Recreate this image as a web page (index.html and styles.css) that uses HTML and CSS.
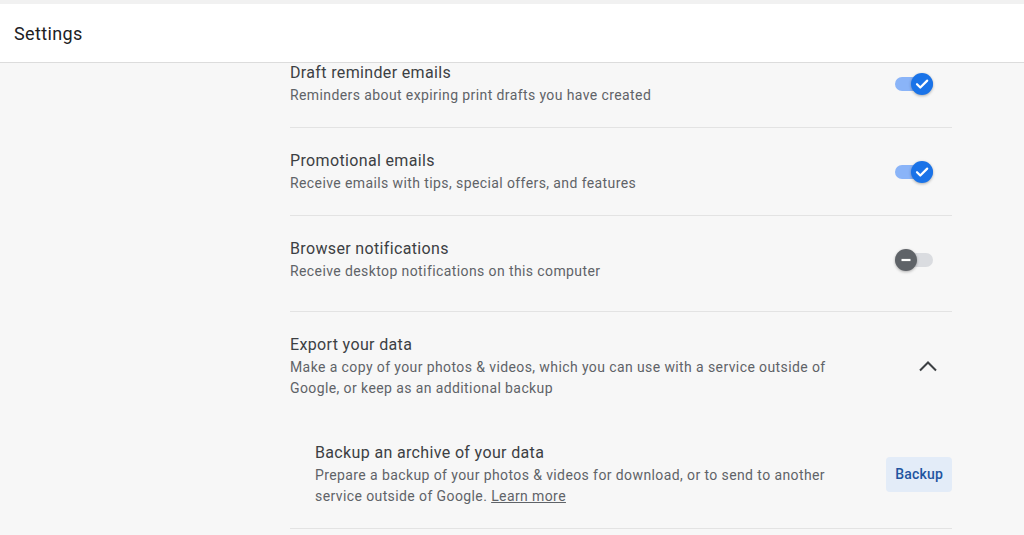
FILE: index.html
```html
<!DOCTYPE html>
<html lang="en">
<head>
  <meta charset="UTF-8">
  <title>Settings</title>
  <link rel="stylesheet" href="styles.css">
</head>
<body>

  <header class="topbar">
    <h1 class="topbar-title">Settings</h1>
  </header>

  <main class="content">
    <section class="group">
      <div class="row">
        <div class="row-text">
          <div class="row-title">Draft reminder emails</div>
          <div class="row-desc">Reminders about expiring print drafts you have created</div>
        </div>
        <div class="toggle on">
          <span class="track"></span>
          <span class="knob">
            <svg viewBox="0 0 22 22" width="22" height="22"><path d="M6 11.2l3.3 3.3L16.2 7.6" fill="none" stroke="#fff" stroke-width="2.2" stroke-linecap="round" stroke-linejoin="round"/></svg>
          </span>
        </div>
      </div>

      <div class="row">
        <div class="row-text">
          <div class="row-title">Promotional emails</div>
          <div class="row-desc">Receive emails with tips, special offers, and features</div>
        </div>
        <div class="toggle on">
          <span class="track"></span>
          <span class="knob">
            <svg viewBox="0 0 22 22" width="22" height="22"><path d="M6 11.2l3.3 3.3L16.2 7.6" fill="none" stroke="#fff" stroke-width="2.2" stroke-linecap="round" stroke-linejoin="round"/></svg>
          </span>
        </div>
      </div>

      <div class="row">
        <div class="row-text">
          <div class="row-title">Browser notifications</div>
          <div class="row-desc">Receive desktop notifications on this computer</div>
        </div>
        <div class="toggle off">
          <span class="track"></span>
          <span class="knob">
            <svg viewBox="0 0 22 22" width="22" height="22"><path d="M6.5 11h9" stroke="#fff" stroke-width="2.2"/></svg>
          </span>
        </div>
      </div>
    </section>

    <section class="export">
      <div class="row export-head">
        <div class="row-text">
          <div class="row-title">Export your data</div>
          <div class="row-desc">Make a copy of your photos &amp; videos, which you can use with a service outside of Google, or keep as an additional backup</div>
        </div>
        <div class="chevron">
          <svg viewBox="0 0 20 12" width="20" height="12"><path d="M2 10.5l8-8 8 8" fill="none" stroke="#3c4043" stroke-width="2"/></svg>
        </div>
      </div>

      <div class="row sub-row">
        <div class="row-text">
          <div class="row-title">Backup an archive of your data</div>
          <div class="row-desc">Prepare a backup of your photos &amp; videos for download, or to send to another service outside of Google. <a href="#" class="learn">Learn more</a></div>
        </div>
        <button class="btn-backup">Backup</button>
      </div>
    </section>
  </main>

</body>
</html>
```

FILE: styles.css
```css
html, body { background: #f7f7f7; }
body { margin: 0; font-family: Roboto, "Liberation Sans", sans-serif; color: #3c4043; }

.topbar {
  position: relative; z-index: 1;
  height: 58px;
  background: #fff; border-top: 4px solid #f1f1f1; border-bottom: 1px solid #dcdcdc;
  display: flex; align-items: center; padding-left: 14px;
}
.topbar-title { margin: 0; font-size: 18px; font-weight: 400; color: #202124; letter-spacing: 0.35px; }

.content { width: 662px; margin: -23px 0 0 290px; }

.row { display: flex; align-items: center; padding: 21px 0; border-bottom: 1px solid #e3e3e3; gap: 40px; }
.group .row:last-child { border-bottom: none; }
.row-text { flex: 1; }
.row-title { font-size: 16px; line-height: 24px; color: #3c4043; letter-spacing: 0.35px; }
.row-desc { font-size: 14px; line-height: 21px; color: #5f6368; letter-spacing: 0.4px; }

.export { margin-top: 8px; border-top: 1px solid #e3e3e3; }
.export-head { border-bottom: none; }
.sub-row { padding-left: 25px; gap: 24px; }

.toggle { position: relative; width: 38px; height: 22px; margin-right: 19px; }
.track { position: absolute; left: 0; right: 0; top: 4px; height: 14px; border-radius: 7px; }
.knob {
  position: absolute; top: 0; width: 22px; height: 22px; border-radius: 50%;
  box-shadow: 0 1px 3px rgba(0,0,0,0.3);
}
.knob svg { display: block; }
.toggle.on .track { background: #8ab4f8; }
.toggle.on .knob { right: 0; background: #1a73e8; }
.toggle.off .track { background: #dadce0; }
.toggle.off .knob { left: 0; background: #5f6368; }

.chevron { width: 48px; display: flex; justify-content: center; }
.chevron svg { display: block; }

.learn { color: #5f6368; text-decoration: underline; }

.btn-backup {
  height: 35px; padding: 0 9px; border: none; border-radius: 4px;
  background: #e3ecf8; color: #1f55a0;
  font-family: Roboto, "Liberation Sans", sans-serif; font-size: 14px; font-weight: 500; letter-spacing: 0.2px;
  cursor: pointer;
}
```
